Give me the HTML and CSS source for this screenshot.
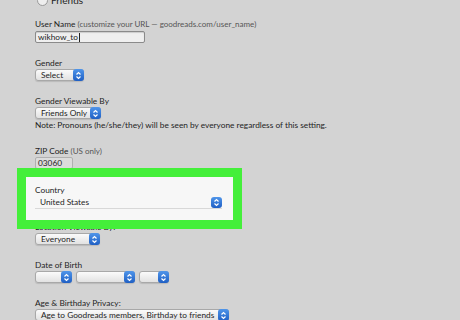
FILE: index.html
```html
<!DOCTYPE html>
<html lang="en">
<head>
  <meta charset="UTF-8" />
  <title>Edit Profile</title>
  <link rel="stylesheet" href="styles.css">
</head>
<body>
  <div class="form">
    <!-- privacy radio cut off at top -->
    <div class="radio-row"><span class="radio"></span>Friends</div>

    <div class="field">
      <div class="label">User Name <span class="hint">(customize your URL — goodreads.com/user_name)</span></div>
      <div class="input username">wikhow_to<span class="caret"></span></div>
    </div>

    <div class="field">
      <div class="label">Gender</div>
      <div class="select w-gender"><span class="value">Select</span><span class="stepper"><svg width="7" height="9" viewBox="0 0 7 9"><path d="M1.5 3.5 L3.5 1.5 L5.5 3.5 M1.5 5.5 L3.5 7.5 L5.5 5.5" fill="none" stroke="#fff" stroke-width="1.2"/></svg></span></div>
    </div>

    <div class="field">
      <div class="label">Gender Viewable By</div>
      <div class="select w-friends"><span class="value">Friends Only</span><span class="stepper"><svg width="7" height="9" viewBox="0 0 7 9"><path d="M1.5 3.5 L3.5 1.5 L5.5 3.5 M1.5 5.5 L3.5 7.5 L5.5 5.5" fill="none" stroke="#fff" stroke-width="1.2"/></svg></span></div>
      <div class="note">Note: Pronouns (he/she/they) will be seen by everyone regardless of this setting.</div>
    </div>

    <div class="field">
      <div class="label">ZIP Code <span class="hint">(US only)</span></div>
      <div class="input zip">03060</div>
    </div>

    <!-- highlighted field -->
    <div class="field highlight">
      <div class="label">Country</div>
      <div class="select country"><span class="value">United States</span><span class="stepper"><svg width="7" height="9" viewBox="0 0 7 9"><path d="M1.5 3.5 L3.5 1.5 L5.5 3.5 M1.5 5.5 L3.5 7.5 L5.5 5.5" fill="none" stroke="#fff" stroke-width="1.2"/></svg></span></div>
    </div>

    <div class="field">
      <div class="label">Location Viewable By:</div>
      <div class="select w-everyone"><span class="value">Everyone</span><span class="stepper"><svg width="7" height="9" viewBox="0 0 7 9"><path d="M1.5 3.5 L3.5 1.5 L5.5 3.5 M1.5 5.5 L3.5 7.5 L5.5 5.5" fill="none" stroke="#fff" stroke-width="1.2"/></svg></span></div>
    </div>

    <div class="field">
      <div class="label">Date of Birth</div>
      <div class="dob">
        <div class="select w-month"><span class="value"></span><span class="stepper"><svg width="7" height="9" viewBox="0 0 7 9"><path d="M1.5 3.5 L3.5 1.5 L5.5 3.5 M1.5 5.5 L3.5 7.5 L5.5 5.5" fill="none" stroke="#fff" stroke-width="1.2"/></svg></span></div>
        <div class="select w-day"><span class="value"></span><span class="stepper"><svg width="7" height="9" viewBox="0 0 7 9"><path d="M1.5 3.5 L3.5 1.5 L5.5 3.5 M1.5 5.5 L3.5 7.5 L5.5 5.5" fill="none" stroke="#fff" stroke-width="1.2"/></svg></span></div>
        <div class="select w-year"><span class="value"></span><span class="stepper"><svg width="7" height="9" viewBox="0 0 7 9"><path d="M1.5 3.5 L3.5 1.5 L5.5 3.5 M1.5 5.5 L3.5 7.5 L5.5 5.5" fill="none" stroke="#fff" stroke-width="1.2"/></svg></span></div>
      </div>
    </div>

    <div class="field">
      <div class="label">Age &amp; Birthday Privacy:</div>
      <div class="select w-age"><span class="value">Age to Goodreads members, Birthday to friends</span><span class="stepper"><svg width="7" height="9" viewBox="0 0 7 9"><path d="M1.5 3.5 L3.5 1.5 L5.5 3.5 M1.5 5.5 L3.5 7.5 L5.5 5.5" fill="none" stroke="#fff" stroke-width="1.2"/></svg></span></div>
    </div>
  </div>
</body>
</html>
```

FILE: styles.css
```css
* { box-sizing: border-box; }
html, body { height: 100%; }
body {
  margin: 0;
  background: #d3d3d3;
  font-family: Lato, "Open Sans", sans-serif;
  font-size: 8.3px;
  color: #1e1e1e;
  overflow: hidden;
}

.form { padding-left: 35px; margin-top: -6px; }

/* radio row, mostly off screen */
.radio-row { display: flex; align-items: center; height: 12px; margin-bottom: 12px; font-size: 10px; }
.radio {
  width: 11px; height: 11px;
  border: 1px solid #999;
  border-radius: 50%;
  background: #eee;
  margin: 0 3px 0 2px;
}

.field { margin-bottom: 14px; }
.label { line-height: 12px; height: 12px; white-space: nowrap; }
.hint { font-size: 8px; color: #555; }
.note { line-height: 12px; margin-bottom: 1px; white-space: nowrap; }

/* text inputs */
.input {
  height: 12px;
  line-height: 10px;
  padding: 0 2px;
  border: 1px solid #8a8a8a;
  border-radius: 2px;
  background: #efefef;
  box-shadow: inset 0 1px 1px rgba(0,0,0,0.15);
}
.username { width: 110px; margin-top: 1px; display: flex; align-items: center; }
.caret { width: 1px; height: 9px; background: #222; margin-left: 1px; }
.zip { width: 38px; border-color: #b0b0b0; background: #dcdcdc; box-shadow: none; }

/* selects with blue stepper */
.select {
  display: flex;
  align-items: stretch;
  height: 12px;
  border: 1px solid #a8a8a8;
  border-radius: 3px;
  background: linear-gradient(#fbfbfb, #e2e2e2);
  box-shadow: 0 1px 1px rgba(0,0,0,0.12);
}
.select .value { flex: 1; line-height: 10px; padding-left: 5px; white-space: nowrap; overflow: hidden; }
.stepper {
  width: 11px;
  margin: -1px -1px -1px 0;
  border-radius: 3px;
  background: linear-gradient(#4f95ea, #1f5fc4);
  display: flex; align-items: center; justify-content: center;
}

.w-gender { width: 49px; }
.w-friends { width: 66px; }
.w-everyone { width: 65px; }
.w-age { width: 194px; }

.dob { display: flex; gap: 4px; }
.w-month { width: 37px; }
.w-day { width: 59px; }
.w-year { width: 30px; }

/* green highlight around country */
.highlight {
  position: relative;
  z-index: 1;
  width: 225px;
  margin: -15px 0 -8px -18px;
  border: 9px solid #44ef3a;
  background: #f7f7f7;
  padding: 7px 10px 11px 9px;
}
.select.country {
  width: 187px;
  border: none;
  border-bottom: 1px solid #d8d8d8;
  border-radius: 0;
  background: #f7f7f7;
  box-shadow: none;
  height: 12px;
  margin-top: 1px;
}
.country .value { line-height: 11px; }
.country .stepper { margin: 0; }
```
